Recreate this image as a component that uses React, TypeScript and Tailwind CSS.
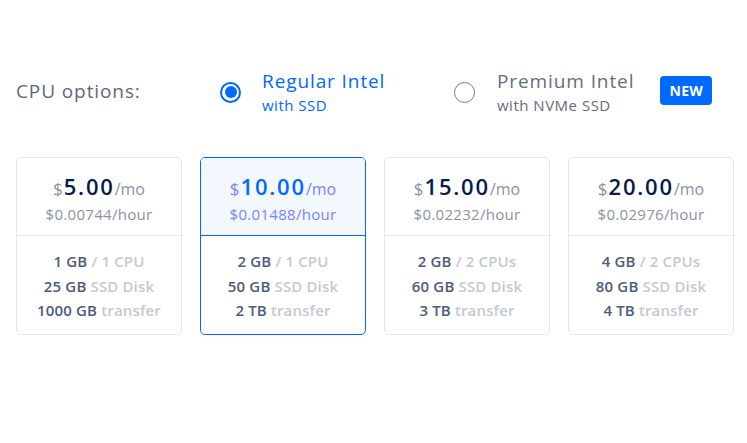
import React from "react";

const plans = [
  { price: "5.00", hour: "$0.00744/hour", mem: "1 GB", cpu: "/ 1 CPU", disk: "25 GB", tr: "1000 GB", sel: false },
  { price: "10.00", hour: "$0.01488/hour", mem: "2 GB", cpu: "/ 1 CPU", disk: "50 GB", tr: "2 TB", sel: true },
  { price: "15.00", hour: "$0.02232/hour", mem: "2 GB", cpu: "/ 2 CPUs", disk: "60 GB", tr: "3 TB", sel: false },
  { price: "20.00", hour: "$0.02976/hour", mem: "4 GB", cpu: "/ 2 CPUs", disk: "80 GB", tr: "4 TB", sel: false },
];

export default function App() {
  return (
    <div
      className="w-[747px] h-[443px] bg-white"
      style={{ fontFamily: '"Open Sans", "Noto Sans", sans-serif' }}
    >
      <div className="pt-[67px] px-4 flex items-center h-[50px] box-content">
        <div className="w-[204px] text-[19px] tracking-[0.9px] text-[#5f6779] font-medium -mt-[2px]">CPU options:</div>
        <div className="flex items-center w-[234px]">
          <div className="w-[21px] h-[21px] rounded-full border-2 border-[#0069ff] flex items-center justify-center">
            <div className="w-[12px] h-[12px] rounded-full bg-[#0069ff]" />
          </div>
          <div className="ml-[21px] flex flex-col">
            <span className="text-[19px] tracking-[0.9px] leading-[26px] text-[#0069ff]">Regular Intel</span>
            <span className="text-[15px] tracking-[0.5px] leading-[22px] text-[#0069ff]">with SSD</span>
          </div>
        </div>
        <div className="flex items-center">
          <div className="w-[21px] h-[21px] rounded-full border-[1.5px] border-[#747680]" />
          <div className="ml-[22px] flex flex-col">
            <span className="text-[19px] tracking-[0.9px] leading-[26px] text-[#666d7e]">Premium Intel</span>
            <span className="text-[15px] tracking-[0.5px] leading-[22px] text-[#666d7e]">with NVMe SSD</span>
          </div>
          <div className="ml-[26px] -mt-[4px] bg-[#0069ff] text-white text-[14px] font-bold tracking-[0.3px] rounded-[4px] w-[52px] h-[29px] flex items-center justify-center">
            NEW
          </div>
        </div>
      </div>
      <div className="mt-[40px] pl-4 flex gap-[18px]">
        {plans.map((p) => (
          <div
            key={p.price}
            className={`w-[166px] h-[178px] shrink-0 rounded-[5px] border ${p.sel ? "border-[#0069ff]" : "border-[#e3e6ec]"}`}
          >
            <div
              className={`h-[78px] pt-[15px] flex flex-col items-center border-b ${
                p.sel ? "bg-[#f3f8ff] border-[#0069ff] rounded-t-[4px]" : "border-[#e8ebf0]"
              }`}
            >
              <div className="flex items-baseline leading-[26px]">
                <span className={`text-[17px] mr-[1px] ${p.sel ? "text-[#7a83ff]" : "text-[#8a92a3]"}`}>$</span>
                <span
                  className={`text-[22px] tracking-[1.8px] font-semibold ${p.sel ? "text-[#0069ff]" : "text-[#031b4e]"}`}
                >
                  {p.price}
                </span>
                <span className={`text-[16px] ${p.sel ? "text-[#7a83ff]" : "text-[#8a92a3]"}`}>/mo</span>
              </div>
              <div
                className={`text-[15px] tracking-[0.3px] leading-[24px] ${p.sel ? "text-[#7a83ff]" : "text-[#8a92a3]"}`}
              >
                {p.hour}
              </div>
            </div>
            <div className="pt-[13px] flex flex-col items-center text-[15px] tracking-[0.15px] leading-[24.5px] font-semibold">
              <div>
                <span className="text-[#4d5b7c]">{p.mem}</span> <span className="text-[#c3c9d3]">{p.cpu}</span>
              </div>
              <div>
                <span className="text-[#4d5b7c]">{p.disk}</span> <span className="text-[#c3c9d3]">SSD Disk</span>
              </div>
              <div>
                <span className="text-[#4d5b7c]">{p.tr}</span> <span className="text-[#c3c9d3]">transfer</span>
              </div>
            </div>
          </div>
        ))}
      </div>
    </div>
  );
}
